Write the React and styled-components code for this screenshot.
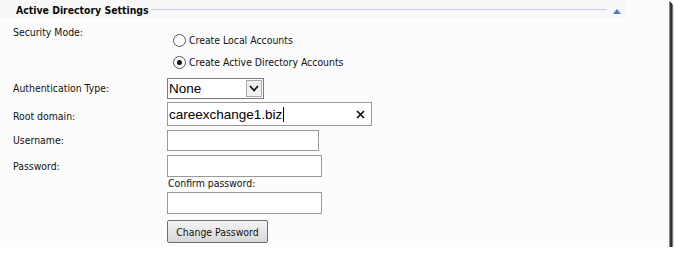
import React from 'react';
import styled, { createGlobalStyle } from 'styled-components';

const Global = createGlobalStyle`
  html, body { margin: 0; padding: 0; background: #ffffff; }
  body { font-family: "DejaVu Sans Condensed", "DejaVu Sans", sans-serif; }
`;

const Frame = styled.div`
  width: 669px;
  height: 247px;
  background: #fcfcfc;
  box-sizing: border-box;
  box-shadow: 1px 1px 0 #8a8a8a, 2px 2px 0 #3a3a3a, 3px 3px 0 #2e2e2e,
    4px 4px 0 rgba(0, 0, 0, 0.45), 5px 5px 1px rgba(0, 0, 0, 0.12);
`;

const Header = styled.div`
  display: flex;
  align-items: center;
  width: 627px;
  height: 20px;
  box-sizing: border-box;
  padding: 0 5px 0 16px;
  background: #f8f8f8;
  border-right: 1px solid #ffffff;
  border-bottom: 1px solid #ffffff;
`;

const Title = styled.h2`
  margin: 0;
  font: bold 10.4px "DejaVu Sans Condensed", "DejaVu Sans", sans-serif;
  color: #0a0a0a;
  white-space: nowrap;
`;

const Rule = styled.div`
  flex: 1;
  height: 1px;
  background: #c3cfe4;
  margin: 0 6px 1px 3px;
`;

const Collapse = styled.svg`
  display: block;
  margin-top: 4px;
`;

const Body = styled.div`
  padding: 6px 0 0 13px;
`;

const Row = styled.div`
  display: flex;
  align-items: ${(p) => p.$align || 'center'};
  margin-top: ${(p) => p.$mt || 0}px;
`;

const Label = styled.label`
  width: 154px;
  flex: none;
  font-size: 10.4px;
  line-height: 13px;
  color: #111;
  padding-top: ${(p) => p.$dy || 0}px;
`;

const RadioGroup = styled.div`
  display: flex;
  flex-direction: column;
  gap: 8px;
  padding: 7px 0 0 6px;
`;

const RadioRow = styled.label`
  display: flex;
  align-items: center;
  gap: 3px;
  font-size: 10.4px;
  line-height: 13px;
  color: #111;
  padding-top: 1px;
`;

const Radio = styled.span`
  width: 11px;
  height: 11px;
  border-radius: 50%;
  border: 1px solid #555;
  background: #fff;
  display: flex;
  align-items: center;
  justify-content: center;
  &::after {
    content: '';
    width: 5px;
    height: 5px;
    border-radius: 50%;
    background: ${(p) => (p.$checked ? '#111' : 'transparent')};
  }
`;

const Select = styled.div`
  display: flex;
  width: 97px;
  height: 21px;
  box-sizing: border-box;
  border: 1px solid #7a7a7a;
  background: #fff;
`;

const SelectValue = styled.span`
  flex: 1;
  padding-left: 1px;
  font: 13.5px/19px "Liberation Sans", Arial, sans-serif;
  color: #000;
`;

const DropButton = styled.span`
  width: 16px;
  margin: 1px;
  box-sizing: border-box;
  border: 1px solid #a8a8a8;
  background: #f0f0f0;
  display: flex;
  align-items: center;
  justify-content: center;
`;

const Field = styled.div`
  display: flex;
  align-items: center;
  width: ${(p) => p.$w}px;
  height: ${(p) => p.$h || 22}px;
  box-sizing: border-box;
  border: 1px solid #999;
  background: #fff;
  padding: 0 6px 0 1px;
  font: 13.5px "Liberation Sans", Arial, sans-serif;
  color: #000;
`;

const Caret = styled.span`
  width: 1px;
  height: 15px;
  background: #000;
  margin-left: 1px;
`;

const Clear = styled.svg`
  margin-left: auto;
  display: block;
`;

const Stack = styled.div`
  display: flex;
  flex-direction: column;
  margin-left: 154px;
`;

const SubLabel = styled.label`
  font-size: 10.4px;
  line-height: 13px;
  color: #111;
  padding-left: 1px;
  margin: 0 0 2px;
`;

const Button = styled.button`
  width: 101px;
  height: 23px;
  margin-top: 6px;
  box-sizing: border-box;
  border: 1px solid #707070;
  border-radius: 2px;
  background: linear-gradient(#f4f4f4, #e6e6e6 50%, #d6d6d6);
  font: 10.4px "DejaVu Sans Condensed", "DejaVu Sans", sans-serif;
  color: #111;
  padding: 0;
`;

export default function App() {
  return (
    <>
      <Global />
      <Frame>
        <Header>
          <Title>Active Directory Settings</Title>
          <Rule />
          <Collapse width="8" height="5" viewBox="0 0 8 5">
            <polygon points="4,0 8,5 0,5" fill="#4f7cc0" />
          </Collapse>
        </Header>
        <Body>
          <Row $align="flex-start">
            <Label>Security Mode:</Label>
            <RadioGroup>
              <RadioRow>
                <Radio />
                Create Local Accounts
              </RadioRow>
              <RadioRow>
                <Radio $checked />
                Create Active Directory Accounts
              </RadioRow>
            </RadioGroup>
          </Row>
          <Row $mt={9}>
            <Label>Authentication Type:</Label>
            <Select>
              <SelectValue>None</SelectValue>
              <DropButton>
                <svg width="10" height="7" viewBox="0 0 10 7">
                  <polyline points="1,1 5,5.5 9,1" fill="none" stroke="#111" strokeWidth="1.8" />
                </svg>
              </DropButton>
            </Select>
          </Row>
          <Row $mt={3}>
            <Label $dy={5}>Root domain:</Label>
            <Field $w={205} $h={24}>
              careexchange1.biz
              <Caret />
              <Clear width="9" height="9" viewBox="0 0 9 9">
                <path d="M1 1 L8 8 M8 1 L1 8" stroke="#111" strokeWidth="1.7" />
              </Clear>
            </Field>
          </Row>
          <Row $mt={4}>
            <Label>Username:</Label>
            <Field $w={152} $h={21} />
          </Row>
          <Row $mt={4}>
            <Label>Password:</Label>
            <Field $w={155} $h={22} />
          </Row>
          <Stack>
            <SubLabel>Confirm password:</SubLabel>
            <Field $w={155} $h={22} />
            <div>
              <Button>Change Password</Button>
            </div>
          </Stack>
        </Body>
      </Frame>
    </>
  );
}
